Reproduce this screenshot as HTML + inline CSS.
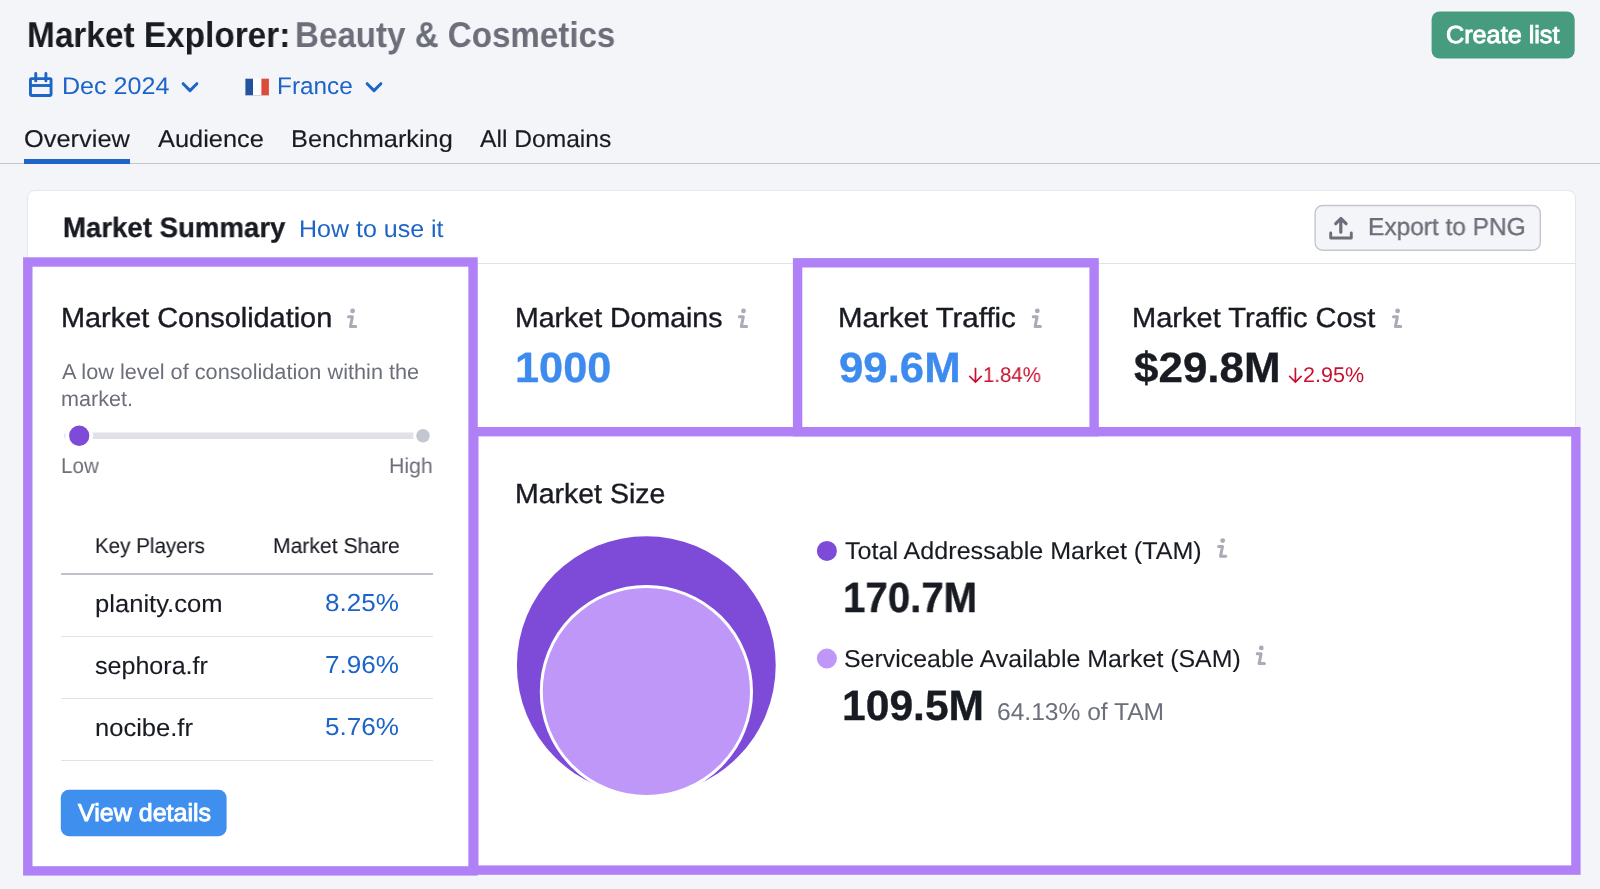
<!DOCTYPE html>
<html lang="en"><head><meta charset="utf-8"><title>Market Explorer: Beauty &amp; Cosmetics</title>
<style>
html,body{margin:0;padding:0}
body{width:1600px;height:889px;overflow:hidden;background:#f4f5f9;position:relative;font-family:"Liberation Sans", Arial, sans-serif}
.t{text-rendering:geometricPrecision;will-change:transform;position:absolute;white-space:pre;line-height:1;transform-origin:0 0;display:block}
.abs{position:absolute;box-sizing:border-box}
.ov{position:absolute;left:0;top:0}
.pb{position:absolute;box-sizing:border-box;border:9.4px solid #b080f7}
.hl{position:absolute;height:1px;background:#e0e1e9}
</style></head><body>
<div class="abs" style="left:0;top:162.6px;width:1600px;height:1.4px;background:#c4c7cf"></div>
<div class="abs" style="left:24.25px;top:159.3px;width:106px;height:4.7px;background:#1d66c7"></div>
<!-- card -->
<div class="abs" style="left:26.5px;top:190px;width:1549.5px;height:682px;border-radius:8px;background:#fff;border:1px solid #e6e7ed"></div>
<div class="hl" style="left:27.5px;top:263.3px;width:1548px"></div>
<!-- table lines -->
<div class="hl" style="left:60.8px;top:573px;width:372.2px;background:#bfc2cb;height:2px"></div>
<div class="hl" style="left:60.8px;top:635.5px;width:372.2px"></div>
<div class="hl" style="left:60.8px;top:697.6px;width:372.2px"></div>
<div class="hl" style="left:60.8px;top:760px;width:372.2px"></div>
<!-- purple highlight boxes -->
<svg class="ov" width="1600" height="889" viewBox="0 0 1600 889"><g fill="none" stroke="#b080f7" stroke-width="9.4">
<rect x="27.8" y="262" width="445.25" height="608.9"/>
<rect x="797.6" y="262.8" width="296.5" height="168.9"/>
<rect x="473.8" y="431.7" width="1102.1" height="438.4"/>
</g></svg>
<svg class="ov" width="1600" height="889" viewBox="0 0 1600 889">
<rect x="1431.6" y="11.5" width="143.1" height="47" rx="8" fill="#479b7f"/>
<rect x="60.8" y="789.8" width="165.8" height="46.4" rx="8" fill="#3e8fee"/>
<rect x="1315.1" y="205.5" width="225.2" height="44.8" rx="7.5" fill="#f4f5f9" stroke="#c4c7cf" stroke-width="1.4"/>
<!-- calendar -->
<rect x="30.45" y="78.6" width="20.6" height="16.95" rx="1" fill="none" stroke="#1d66c7" stroke-width="2.9"/>
<path d="M30.45 85.5 H51.05" stroke="#1d66c7" stroke-width="2.9"/>
<path d="M35.75 73.4 V80.9 M45.9 73.4 V80.9" stroke="#1d66c7" stroke-width="2.9" stroke-linecap="round"/>
<path d="M183.15 83.7 L190 90.6 L196.85 83.7" fill="none" stroke="#1d66c7" stroke-width="3" stroke-linecap="round" stroke-linejoin="round"/><path d="M367.15 83.7 L374 90.6 L380.85 83.7" fill="none" stroke="#1d66c7" stroke-width="3" stroke-linecap="round" stroke-linejoin="round"/>
<!-- flag -->
<rect x="245.4" y="78.7" width="7.6" height="16.9" fill="#23539f"/><rect x="253" y="78.7" width="8.4" height="16.9" fill="#ffffff"/><rect x="261.4" y="78.7" width="7.5" height="16.9" fill="#dc4a38"/>
<rect x="245.4" y="95.1" width="23.5" height="0.8" fill="#c9cbd2"/>
<!-- export icon -->
<path d="M1330.7 232.9 V238 H1351.3 V232.9" fill="none" stroke="#6c6e79" stroke-width="2.9" stroke-linecap="round" stroke-linejoin="round"/>
<path d="M1340.8 232.2 V218.6 M1335.75 223.7 L1340.8 218.5 L1346.1 223.7" fill="none" stroke="#6c6e79" stroke-width="3.2" stroke-linecap="round" stroke-linejoin="round"/>
<g transform="translate(346 308)"><circle cx="6.6" cy="2.9" r="2.4" fill="#a9abb6"/><path d="M2.5 8.8 H6.4 L4.4 18.6 H9.7" fill="none" stroke="#a9abb6" stroke-width="3" stroke-linecap="round" stroke-linejoin="round"/></g><g transform="translate(736.9 308)"><circle cx="6.6" cy="2.9" r="2.4" fill="#a9abb6"/><path d="M2.5 8.8 H6.4 L4.4 18.6 H9.7" fill="none" stroke="#a9abb6" stroke-width="3" stroke-linecap="round" stroke-linejoin="round"/></g><g transform="translate(1030.7 308)"><circle cx="6.6" cy="2.9" r="2.4" fill="#a9abb6"/><path d="M2.5 8.8 H6.4 L4.4 18.6 H9.7" fill="none" stroke="#a9abb6" stroke-width="3" stroke-linecap="round" stroke-linejoin="round"/></g><g transform="translate(1391 308)"><circle cx="6.6" cy="2.9" r="2.4" fill="#a9abb6"/><path d="M2.5 8.8 H6.4 L4.4 18.6 H9.7" fill="none" stroke="#a9abb6" stroke-width="3" stroke-linecap="round" stroke-linejoin="round"/></g><g transform="translate(1216.1 537.7)"><circle cx="6.6" cy="2.9" r="2.4" fill="#a9abb6"/><path d="M2.5 8.8 H6.4 L4.4 18.6 H9.7" fill="none" stroke="#a9abb6" stroke-width="3" stroke-linecap="round" stroke-linejoin="round"/></g><g transform="translate(1254.7 645.0)"><circle cx="6.6" cy="2.9" r="2.4" fill="#a9abb6"/><path d="M2.5 8.8 H6.4 L4.4 18.6 H9.7" fill="none" stroke="#a9abb6" stroke-width="3" stroke-linecap="round" stroke-linejoin="round"/></g>
<path d="M975.5 368.6 V381.8 M969.9 376.5 L975.5 382.1 L981.1 376.5" fill="none" stroke="#c8102f" stroke-width="1.7" stroke-linecap="square" stroke-linejoin="miter"/><path d="M1295.4 368.6 V381.8 M1289.8000000000002 376.5 L1295.4 382.1 L1301.0 376.5" fill="none" stroke="#c8102f" stroke-width="1.7" stroke-linecap="square" stroke-linejoin="miter"/>
<!-- slider -->
<rect x="64" y="432.5" width="352" height="6.6" rx="3.3" fill="#e0e1e9"/>
<circle cx="79.2" cy="435.75" r="13.8" fill="#ffffff"/>
<circle cx="79.2" cy="435.75" r="10.15" fill="#7e4bd8"/>
<circle cx="423" cy="435.75" r="10" fill="#ffffff"/><circle cx="423" cy="435.75" r="6.8" fill="#c4c7cf"/>
<!-- circles -->
<circle cx="646.3" cy="665.6" r="129.4" fill="#7e4bd8"/>
<circle cx="646.4" cy="691.5" r="105.1" fill="#be97f8" stroke="#ffffff" stroke-width="3"/>
<circle cx="826.9" cy="550.9" r="10" fill="#7e4bd8"/>
<circle cx="826.9" cy="658.5" r="10" fill="#be97f8"/>
</svg>
<span class="t" style="left:27.24px;top:18.00px;font-size:35.9px;font-weight:700;color:#191b23;transform:scaleX(0.9299)">Market Explorer:</span>
<span class="t" style="left:295.15px;top:18.00px;font-size:35.9px;font-weight:700;color:#6c6e79;transform:scaleX(0.9230)">Beauty &amp; Cosmetics</span>
<span class="t" style="left:61.52px;top:75.00px;font-size:24.1px;font-weight:400;color:#1c64c8;transform:scaleX(1.0416)">Dec 2024</span>
<span class="t" style="left:277.48px;top:75.00px;font-size:24.1px;font-weight:400;color:#1c64c8;transform:scaleX(1.0111)">France</span>
<span class="t" style="left:24.20px;top:128.00px;font-size:24.2px;font-weight:400;color:#191b23;-webkit-text-stroke:0.15px #191b23;transform:scaleX(1.0500)">Overview</span>
<span class="t" style="left:158.00px;top:128.00px;font-size:24.2px;font-weight:400;color:#191b23;-webkit-text-stroke:0.15px #191b23;transform:scaleX(1.0500)">Audience</span>
<span class="t" style="left:290.91px;top:128.00px;font-size:24.2px;font-weight:400;color:#191b23;-webkit-text-stroke:0.15px #191b23;transform:scaleX(1.0461)">Benchmarking</span>
<span class="t" style="left:480.30px;top:128.00px;font-size:24.2px;font-weight:400;color:#191b23;-webkit-text-stroke:0.15px #191b23;transform:scaleX(1.0178)">All Domains</span>
<span class="t" style="left:1445.97px;top:24.00px;font-size:24.6px;font-weight:400;color:#ffffff;-webkit-text-stroke:0.9px #ffffff;transform:scaleX(1.0250)">Create list</span>
<span class="t" style="left:62.51px;top:214.00px;font-size:28px;font-weight:700;color:#191b23;-webkit-text-stroke:0.3px #191b23;transform:scaleX(0.9858)">Market Summary</span>
<span class="t" style="left:298.72px;top:218.00px;font-size:24.1px;font-weight:400;color:#1c64c8;transform:scaleX(1.0380)">How to use it</span>
<span class="t" style="left:1368.31px;top:216.00px;font-size:24.6px;font-weight:400;color:#6c6e79;-webkit-text-stroke:0.35px #6c6e79;transform:scaleX(0.9942)">Export to PNG</span>
<span class="t" style="left:60.81px;top:304.00px;font-size:27.7px;font-weight:400;color:#191b23;-webkit-text-stroke:0.4px #191b23;transform:scaleX(1.0428)">Market Consolidation</span>
<span class="t" style="left:61.60px;top:362.00px;font-size:21.5px;font-weight:400;color:#6c6e79;transform:scaleX(1.0096)">A low level of consolidation within the</span>
<span class="t" style="left:61.30px;top:389.00px;font-size:21.5px;font-weight:400;color:#6c6e79;transform:scaleX(1.0043)">market.</span>
<span class="t" style="left:61.44px;top:456.00px;font-size:21.5px;font-weight:400;color:#6c6e79;transform:scaleX(0.9590)">Low</span>
<span class="t" style="left:389.31px;top:456.00px;font-size:21.5px;font-weight:400;color:#6c6e79;transform:scaleX(0.9881)">High</span>
<span class="t" style="left:95.14px;top:536.00px;font-size:21.5px;font-weight:400;color:#191b23;-webkit-text-stroke:0.1px #191b23;transform:scaleX(0.9575)">Key Players</span>
<span class="t" style="left:273.22px;top:536.00px;font-size:21.5px;font-weight:400;color:#191b23;-webkit-text-stroke:0.1px #191b23;transform:scaleX(0.9827)">Market Share</span>
<span class="t" style="left:95.06px;top:593.00px;font-size:24.6px;font-weight:400;color:#191b23;-webkit-text-stroke:0.1px #191b23;transform:scaleX(1.0408)">planity.com</span>
<span class="t" style="left:324.84px;top:592.00px;font-size:24.6px;font-weight:400;color:#1c64c8;transform:scaleX(1.0603)">8.25%</span>
<span class="t" style="left:95.08px;top:655.00px;font-size:24.6px;font-weight:400;color:#191b23;-webkit-text-stroke:0.1px #191b23;transform:scaleX(1.0191)">sephora.fr</span>
<span class="t" style="left:324.84px;top:654.00px;font-size:24.6px;font-weight:400;color:#1c64c8;transform:scaleX(1.0603)">7.96%</span>
<span class="t" style="left:95.06px;top:717.00px;font-size:24.6px;font-weight:400;color:#191b23;-webkit-text-stroke:0.1px #191b23;transform:scaleX(1.0387)">nocibe.fr</span>
<span class="t" style="left:324.84px;top:716.00px;font-size:24.6px;font-weight:400;color:#1c64c8;transform:scaleX(1.0603)">5.76%</span>
<span class="t" style="left:78.02px;top:802.00px;font-size:24.6px;font-weight:400;color:#ffffff;-webkit-text-stroke:0.9px #ffffff;transform:scaleX(1.0174)">View details</span>
<span class="t" style="left:514.84px;top:304.00px;font-size:27.7px;font-weight:400;color:#191b23;-webkit-text-stroke:0.4px #191b23;transform:scaleX(1.0291)">Market Domains</span>
<span class="t" style="left:515.06px;top:347.00px;font-size:42.4px;font-weight:700;color:#3d8bef;-webkit-text-stroke:0.35px #3d8bef;transform:scaleX(1.0209)">1000</span>
<span class="t" style="left:838.07px;top:304.00px;font-size:27.7px;font-weight:400;color:#191b23;-webkit-text-stroke:0.4px #191b23;transform:scaleX(1.0636)">Market Traffic</span>
<span class="t" style="left:838.87px;top:347.00px;font-size:42.4px;font-weight:700;color:#3d8bef;-webkit-text-stroke:0.35px #3d8bef;transform:scaleX(1.0325)">99.6M</span>
<span class="t" style="left:983.04px;top:365.00px;font-size:21.3px;font-weight:400;color:#c8102f;transform:scaleX(0.9576)">1.84%</span>
<span class="t" style="left:1131.90px;top:304.00px;font-size:27.7px;font-weight:400;color:#191b23;-webkit-text-stroke:0.4px #191b23;transform:scaleX(1.0491)">Market Traffic Cost</span>
<span class="t" style="left:1133.70px;top:347.00px;font-size:42.4px;font-weight:700;color:#191b23;-webkit-text-stroke:0.35px #191b23;transform:scaleX(1.0374)">$29.8M</span>
<span class="t" style="left:1302.99px;top:365.00px;font-size:21.3px;font-weight:400;color:#c8102f;transform:scaleX(1.0119)">2.95%</span>
<span class="t" style="left:514.84px;top:480.00px;font-size:27.7px;font-weight:400;color:#191b23;-webkit-text-stroke:0.4px #191b23;transform:scaleX(1.0280)">Market Size</span>
<span class="t" style="left:844.90px;top:540.00px;font-size:24.4px;font-weight:400;color:#191b23;-webkit-text-stroke:0.1px #191b23;transform:scaleX(1.0293)">Total Addressable Market (TAM)</span>
<span class="t" style="left:842.70px;top:577.00px;font-size:42.4px;font-weight:700;color:#191b23;-webkit-text-stroke:0.35px #191b23;transform:scaleX(0.9489)">170.7M</span>
<span class="t" style="left:843.88px;top:648.00px;font-size:24.4px;font-weight:400;color:#191b23;-webkit-text-stroke:0.1px #191b23;transform:scaleX(1.0210)">Serviceable Available Market (SAM)</span>
<span class="t" style="left:842.19px;top:685.00px;font-size:42.4px;font-weight:700;color:#191b23;-webkit-text-stroke:0.35px #191b23;transform:scaleX(1.0051)">109.5M</span>
<span class="t" style="left:996.59px;top:701.00px;font-size:24.4px;font-weight:400;color:#6c6e79;transform:scaleX(1.0074)">64.13% of TAM</span>
</body></html>
